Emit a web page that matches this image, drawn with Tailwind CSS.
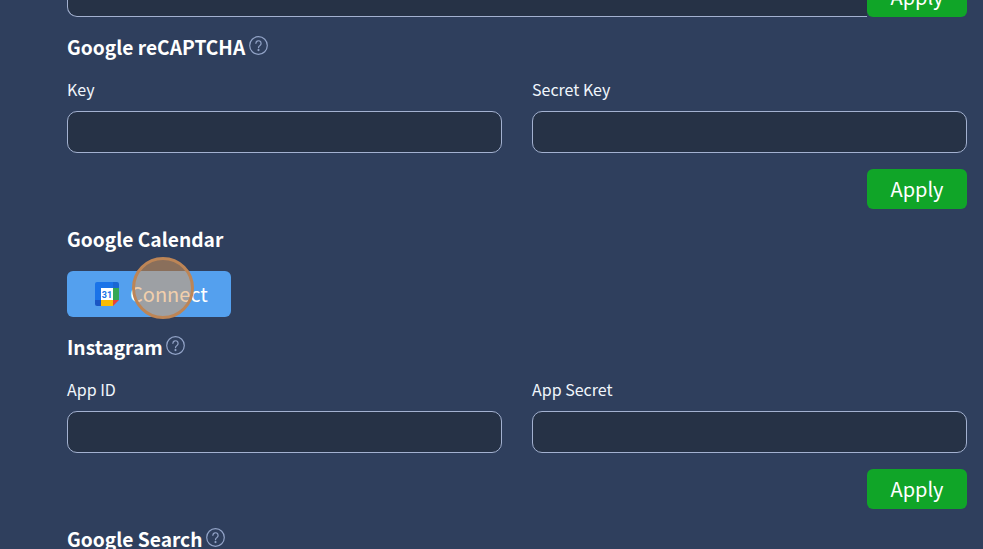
<!DOCTYPE html>
<html><head><meta charset="utf-8"><script src="https://cdn.jsdelivr.net/npm/@tailwindcss/browser@4"></script></head>
<body class="m-0">
<div class="relative h-[549px] w-[983px] overflow-hidden bg-[#2f3f5d] pl-[67px] pr-4 font-['Noto_Sans_CJK_SC','Noto_Sans',sans-serif] text-white">
  <div class="flex h-[40px] -mt-[23px]">
    <div class="flex-1 h-[40px] rounded-bl-[10px] border border-[#a3b1d0] border-r-0 bg-[#263246]"></div>
    <button class="h-[40px] w-[100px] rounded-b-[6px] bg-[#10a528] text-[20px] leading-[40px]">Apply</button>
  </div>
  <div class="mt-[15px] flex h-[30px] items-center gap-[3.5px]">
    <h2 class="text-[19.2px] font-semibold leading-[30px]">Google reCAPTCHA</h2>
    <svg class="mb-[4px] h-[19px] w-[19px]" viewBox="0 0 19 19" fill="none" stroke="#93a4c8" stroke-width="1.2"><circle cx="9.5" cy="9.5" r="8.800"/><path d="M6.900 7.300a2.600 2.600 0 1 1 4.100 2.200c-.9.600-1.500 1-1.500 2.200" stroke-linecap="round"/><circle cx="9.500" cy="14.100" r=".5" fill="#93a4c8"/></svg>
  </div>
  <div class="mt-[15px] grid grid-cols-2 gap-x-[30px]">
    <div><label class="block h-[24px] text-[16px] leading-[24px] text-[#f0f6fc]">Key</label><div class="mt-[10px] h-[42px] rounded-[10px] border border-[#a3b1d0] bg-[#263246]"></div></div>
    <div><label class="block h-[24px] text-[16px] leading-[24px] text-[#f0f6fc]">Secret Key</label><div class="mt-[10px] h-[42px] rounded-[10px] border border-[#a3b1d0] bg-[#263246]"></div></div>
  </div>
  <div class="mt-[16px] flex justify-end"><button class="h-[40px] w-[100px] rounded-[6px] bg-[#10a528] text-[20px] leading-[40px]">Apply</button></div>
  <h2 class="mt-[15px] h-[30px] text-[19.2px] font-semibold leading-[30px]">Google Calendar</h2>
  <button class="mt-[17px] flex h-[46px] w-[164px] items-center gap-[11px] rounded-[6px] bg-[#54a0ee] pl-[28px] text-[20px]">
    <svg class="h-[24px] w-[24px]" viewBox="0 0 24 24"><path d="M2 0h16v6H6v12H0V2a2 2 0 0 1 2-2z" fill="#1a73e8"/><path d="M18 0h4a2 2 0 0 1 2 2v4h-6z" fill="#1967d2"/><rect x="18" y="6" width="6" height="12" fill="#34a853"/><path d="M6 18h12v6H6z" fill="#fbbc04"/><path d="M0 18h6v6H2a2 2 0 0 1-2-2z" fill="#1a56c4"/><path d="M18 18h6l-6 6z" fill="#ea4335"/><rect x="6" y="6" width="12" height="12" fill="#fff"/><text x="12" y="15.500" font-size="9" font-weight="700" text-anchor="middle" fill="#1a73e8" font-family="Roboto">31</text></svg>
    <span class="text-white">Connect</span>
  </button>
  <div class="mt-[15px] flex h-[30px] items-center gap-[3.5px]">
    <h2 class="text-[19.2px] font-semibold leading-[30px]">Instagram</h2>
    <svg class="mb-[4px] h-[19px] w-[19px]" viewBox="0 0 19 19" fill="none" stroke="#93a4c8" stroke-width="1.2"><circle cx="9.5" cy="9.5" r="8.800"/><path d="M6.900 7.300a2.600 2.600 0 1 1 4.100 2.200c-.9.600-1.500 1-1.500 2.200" stroke-linecap="round"/><circle cx="9.500" cy="14.100" r=".5" fill="#93a4c8"/></svg>
  </div>
  <div class="mt-[15px] grid grid-cols-2 gap-x-[30px]">
    <div><label class="block h-[24px] text-[16px] leading-[24px] text-[#f0f6fc]">App ID</label><div class="mt-[10px] h-[42px] rounded-[10px] border border-[#a3b1d0] bg-[#263246]"></div></div>
    <div><label class="block h-[24px] text-[16px] leading-[24px] text-[#f0f6fc]">App Secret</label><div class="mt-[10px] h-[42px] rounded-[10px] border border-[#a3b1d0] bg-[#263246]"></div></div>
  </div>
  <div class="mt-[16px] flex justify-end"><button class="h-[40px] w-[100px] rounded-[6px] bg-[#10a528] text-[20px] leading-[40px]">Apply</button></div>
  <div class="mt-[15px] flex h-[30px] items-center gap-[3.5px]">
    <h2 class="text-[19.2px] font-semibold leading-[30px]">Google Search</h2>
    <svg class="mb-[4px] h-[19px] w-[19px]" viewBox="0 0 19 19" fill="none" stroke="#93a4c8" stroke-width="1.2"><circle cx="9.5" cy="9.5" r="8.800"/><path d="M6.900 7.300a2.600 2.600 0 1 1 4.100 2.200c-.9.600-1.500 1-1.500 2.200" stroke-linecap="round"/><circle cx="9.500" cy="14.100" r=".5" fill="#93a4c8"/></svg>
  </div>
  <div class="absolute left-[132px] top-[257px] h-[62px] w-[62px] rounded-full border-[3px] border-[#bd8556] bg-[#e6a05a]/50"></div>
</div>
</body></html>
